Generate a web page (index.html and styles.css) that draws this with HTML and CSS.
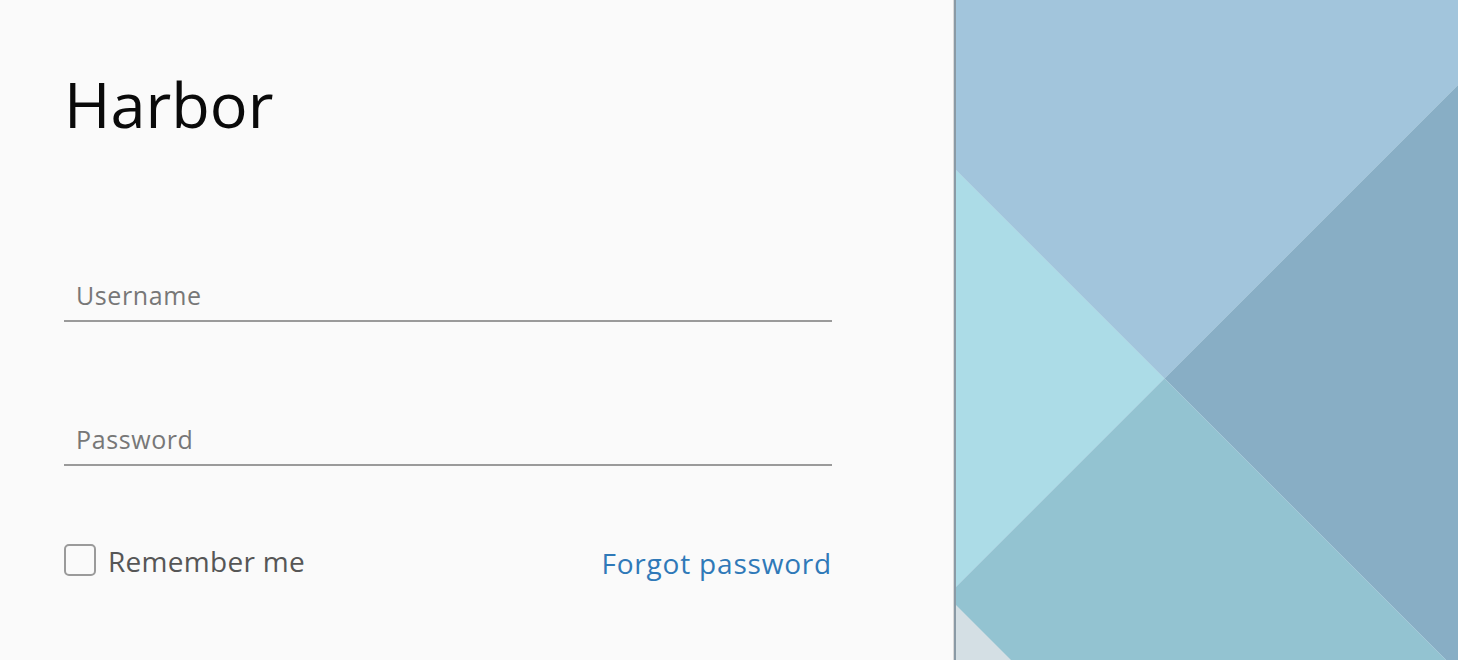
FILE: index.html
```html
<!DOCTYPE html>
<html lang="en">
<head>
<meta charset="utf-8">
<title>Harbor</title>
<link rel="stylesheet" href="styles.css">
</head>
<body>
<div class="page">
  <section class="login">
    <h1 class="title">Harbor</h1>
    <form class="form">
      <input class="field" type="text" placeholder="Username">
      <input class="field field-password" type="password" placeholder="Password">
      <div class="options">
        <label class="remember">
          <span class="box"></span>
          <span class="remember-text">Remember me</span>
        </label>
        <a class="forgot" href="#">Forgot password</a>
      </div>
    </form>
  </section>
  <aside class="art">
    <svg class="art-svg" width="502" height="660" viewBox="0 0 502 660" xmlns="http://www.w3.org/2000/svg">
      <rect x="0" y="0" width="502" height="660" fill="#a2c5dc"/>
      <polygon points="0,170 208.5,378.5 0,587" fill="#acdce7"/>
      <polygon points="502,85 208.5,378.5 490,660 502,660" fill="#88aec5"/>
      <polygon points="0,587 208.5,378.5 490,660 0,660" fill="#93c3d1"/>
      <polygon points="0,605 55,660 0,660" fill="#d4dfe4"/>
      <g stroke="#c4dce8" stroke-width="0.6" opacity="0.6" fill="none">
        <line x1="0" y1="170" x2="490" y2="660"/>
        <line x1="502" y1="85" x2="0" y2="587"/>
      </g>
    </svg>
  </aside>
</div>
</body>
</html>
```

FILE: styles.css
```css
* { box-sizing: border-box; }

html, body {
  margin: 0;
  padding: 0;
  height: 100%;
}

body {
  font-family: "Open Sans", "Noto Sans", sans-serif;
  background: #fafafa;
  overflow: hidden;
}

.page {
  display: flex;
  height: 660px;
}

.login {
  flex: none;
  width: 954px;
  height: 660px;
  background: #fafafa;
  border-right: 1px solid #dadada;
  padding: 72px 0 0 64px;
}

.title {
  margin: 0;
  font-weight: 400;
  font-size: 63px;
  line-height: 63px;
  color: #0a0a0a;
}

.form {
  display: flex;
  flex-direction: column;
  width: 768px;
  margin-top: 135px;
}

.field {
  display: block;
  width: 768px;
  height: 52px;
  padding: 0 12px;
  margin: 0;
  border: none;
  border-bottom: 2px solid #9a9a9a;
  background: transparent;
  font-family: "Open Sans", "Noto Sans", sans-serif;
  font-size: 25px;
  letter-spacing: 0.6px;
  color: #333;
  outline: none;
}

.field::placeholder {
  color: #777;
  opacity: 1;
}

.field-password {
  margin-top: 92px;
}

.options {
  display: flex;
  align-items: center;
  justify-content: space-between;
  margin-top: 78px;
  height: 32px;
}

.remember {
  display: flex;
  align-items: center;
  gap: 12px;
  cursor: pointer;
}

.box {
  width: 32px;
  height: 32px;
  border: 2px solid #9a9a9a;
  border-radius: 5px;
  background: #fafafa;
}

.remember-text {
  font-size: 28px;
  letter-spacing: 0.3px;
  color: #565656;
  margin-top: 2px;
}

.forgot {
  font-size: 28px;
  letter-spacing: 0.8px;
  color: #2f79b8;
  text-decoration: none;
  margin-top: 6px;
}

.art {
  flex: 1;
  height: 660px;
  border-left: 2px solid #8a9aa5;
  overflow: hidden;
}

.art-svg {
  display: block;
}
```
